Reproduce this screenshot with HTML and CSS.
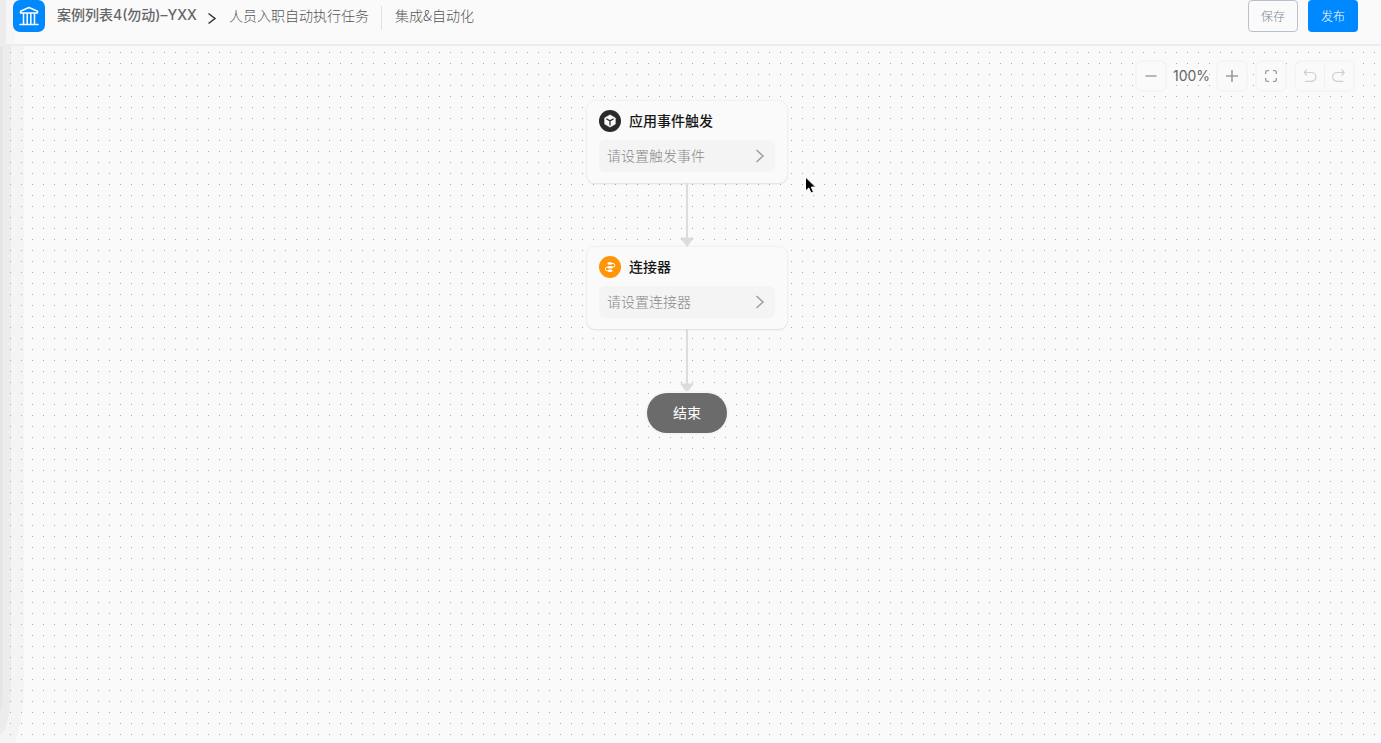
FILE: index.html
```
<!DOCTYPE html>
<html lang="zh-CN">
<head>
<meta charset="utf-8">
<title>集成&amp;自动化</title>
<link rel="stylesheet" href="styles.css">
</head>
<body>
<header class="topbar">
  <a class="logo" href="#" aria-label="首页">
    <svg width="32" height="32" viewBox="0 0 32 32" fill="none" stroke="#fff" stroke-width="1.5" stroke-linecap="round" stroke-linejoin="round"><path d="M7.500 13v-1.800L16 7.500l8.500 3.700V13zM10.500 13v11M14.200 13v11M17.800 13v11M21.500 13v11M7 24.500h18"/></svg>
  </a>
  <nav class="crumbs">
    <a class="crumb crumb-app" href="#">案例列表4(勿动)–YXX</a>
    <svg class="crumb-arrow" width="10" height="14" viewBox="0 0 10 14" fill="none" stroke="#2b3640" stroke-width="1.500"><path d="M1.500 2.500 8 7.500l-6.500 5"/></svg>
    <span class="crumb">人员入职自动执行任务</span>
    <span class="divider"></span>
    <span class="crumb">集成&amp;自动化</span>
  </nav>
  <div class="actions">
    <button class="btn btn-plain" type="button">保存</button>
    <button class="btn btn-primary" type="button">发布</button>
  </div>
</header>
<main class="canvas">
  <div class="edge edge-outer"></div>
  <div class="edge edge-middle"></div>
  <div class="edge edge-inner"></div>
  <div class="dots"></div>
  <div class="tools">
    <button class="tool" type="button" aria-label="缩小"><svg width="16" height="16" viewBox="0 0 16 16" fill="none" stroke="#adb1b6" stroke-width="1.800"><path d="M2.500 8h11"/></svg></button>
    <span class="zoom">100%</span>
    <button class="tool" type="button" aria-label="放大"><svg width="16" height="16" viewBox="0 0 16 16" fill="none" stroke="#9a9ea3" stroke-width="1.600"><path d="M2 8h12M8 2v12"/></svg></button>
    <button class="tool tool-fit" type="button" aria-label="适应画布"><svg width="16" height="16" viewBox="0 0 16 16" fill="none" stroke="#969a9f" stroke-width="1.300" stroke-linecap="round"><path d="M2.700 5.500V4q0-1.300 1.300-1.300h1.500M10.500 2.700H12q1.300 0 1.300 1.300v1.500M13.300 10.500V12q0 1.300-1.300 1.300h-1.500M5.500 13.300H4q-1.300 0-1.300-1.300v-1.500"/></svg></button>
    <div class="history">
      <button class="tool" type="button" aria-label="撤销"><svg width="16" height="16" viewBox="0 0 16 16" fill="none" stroke="#cfd0d2" stroke-width="1.200" stroke-linecap="round" stroke-linejoin="round"><path d="M4.500 2 2.300 4.500 4.500 7M2.300 4.500h7.200a4.400 4.400 0 0 1 0 8.800h-6"/></svg></button>
      <button class="tool" type="button" aria-label="重做"><svg width="16" height="16" viewBox="0 0 16 16" fill="none" stroke="#cfd0d2" stroke-width="1.200" stroke-linecap="round" stroke-linejoin="round"><path d="M11 2l2.200 2.500L11 7M13.200 4.500H6a4.400 4.400 0 0 0 0 8.800h6"/></svg></button>
    </div>
  </div>
  <div class="flow">
    <section class="card">
      <h2 class="card-title">
        <svg width="22" height="22" viewBox="0 0 22 22"><circle cx="11" cy="11" r="11" fill="#2b2b2b"/><path d="M11 4.900 16.300 7.900v6.200L11 17.100l-5.300-3V7.900z" fill="#fff" stroke="#fff" stroke-width=".6" stroke-linejoin="round"/><path d="m7.800 9 3.200 1.900L14.200 9M11 10.900v4" fill="none" stroke="#2b2b2b" stroke-width="1.300" stroke-linecap="round"/></svg>
        <span class="card-name">应用事件触发</span>
      </h2>
      <button class="setting" type="button"><span class="setting-text">请设置触发事件</span>
        <svg width="10" height="14" viewBox="0 0 10 14" fill="none" stroke="#999" stroke-width="1.400"><path d="m1.500 1 6.500 6-6.500 6"/></svg>
      </button>
    </section>
    <svg class="link" width="14" height="64" viewBox="0 0 14 64" fill="#dcdcdc"><path d="M6 0h2v54.500h6L7 64l-7-9.500h6z"/></svg>
    <section class="card">
      <h2 class="card-title">
        <svg width="22" height="22" viewBox="0 0 22 22"><circle cx="11" cy="11" r="11" fill="#ff9507"/><g fill="none" stroke="#fff" stroke-width="1" stroke-linecap="round"><path d="M11 7.500h3a1.800 1.800 0 0 1 0 3.700H8.200a1.800 1.800 0 0 0 0 3.600H11"/></g><g fill="#fff"><rect x="8.500" y="6.200" width="4.500" height="2.600" rx="1.300"/><rect x="8.700" y="9.900" width="4.600" height="2.500" rx="1.200"/><rect x="9" y="13.500" width="4.500" height="2.600" rx="1.300"/></g></svg>
        <span class="card-name">连接器</span>
      </h2>
      <button class="setting" type="button"><span class="setting-text">请设置连接器</span>
        <svg width="10" height="14" viewBox="0 0 10 14" fill="none" stroke="#999" stroke-width="1.400"><path d="m1.500 1 6.500 6-6.500 6"/></svg>
      </button>
    </section>
    <svg class="link" width="14" height="64" viewBox="0 0 14 64" fill="#dcdcdc"><path d="M6 0h2v54.500h6L7 64l-7-9.500h6z"/></svg>
    <div class="end">结束</div>
  </div>
  <svg class="pointer" width="14" height="20" viewBox="0 0 14 20"><path d="M1.500 1v14l3.300-3 2.200 5 2.500-1-2.200-4.900h4.400z" fill="#000" stroke="#fff" stroke-width="1" stroke-linejoin="round"/></svg>
</main>
</body>
</html>
```
FILE: styles.css
```
* {
  box-sizing: border-box;
}

body {
  display: flex;
  flex-direction: column;
  min-height: 100vh;
  margin: 0;
  background: #fafafa;
  color: #666;
  font: 300 14px/20px "Noto Sans CJK SC", sans-serif;
}

button {
  padding: 0;
  border: 0;
  font: inherit;
}

svg {
  display: block;
  flex: none;
}

.topbar {
  display: flex;
  align-items: flex-start;
  height: 46px;
  padding: 0 23px 0 13px;
  border-bottom: 2px solid #ebebf2;
  background: linear-gradient(90deg, #ececec 6px, #f6f6f6 6px, #f6f6f6 15px, #fafafa 15px);
}

.logo {
  border-radius: 7px;
  background: #0089ff;
}

.crumbs {
  display: flex;
  flex: 1;
  align-items: center;
  height: 30px;
  padding-left: 12px;
}

.crumb {
  color: #555;
  text-decoration: none;
  white-space: nowrap;
}

.crumb-app {
  color: #666;
  font-family: Inter, "Noto Sans CJK SC", sans-serif;
  font-weight: 500;
}

.crumb-arrow {
  margin: 5px 12px 0 10px;
}

.divider {
  width: 1px;
  height: 24px;
  margin: 6px 13px 0 12px;
  background: #e2e2e4;
}

.actions {
  display: flex;
  gap: 10px;
}

.btn {
  width: 50px;
  height: 32px;
  border-radius: 4px;
  font-size: 12px;
}

.btn-plain {
  border: 1px solid #b8c2cf;
  background: #fafafa;
  color: #7c8a9c;
}

.btn-primary {
  background: #0089ff;
  color: #fff;
}

.canvas {
  position: relative;
  flex: 1;
  overflow: hidden;
  background: #fafafb;
}

.edge {
  position: absolute;
  left: 0;
  top: 0;
}

.edge-outer {
  width: 24px;
  bottom: -14px;
  border-bottom-right-radius: 24px 70px;
  background: #f4f4f4;
}

.edge-middle {
  width: 11px;
  bottom: 9px;
  border-bottom-right-radius: 11px 50px;
  background: #ececec;
}

.edge-inner {
  width: 3px;
  bottom: 32px;
  border-bottom-right-radius: 3px 30px;
  background: #e5e5e5;
}

.dots {
  position: absolute;
  inset: 6px 0 0 10px;
  background: conic-gradient(from 270deg at 1px 1px, #a9a9b8 90deg, transparent 0) 0 0 / 11px 11px;
}

.tools {
  position: absolute;
  top: 16px;
  right: 28px;
  display: flex;
  align-items: center;
}

.tool {
  display: flex;
  align-items: center;
  justify-content: center;
  width: 28px;
  height: 28px;
  border-radius: 5px;
  background: #fafafa;
  box-shadow: 0 0 0 2px #f5f5f6;
}

.zoom {
  width: 53px;
  font-family: Inter, "Noto Sans CJK SC", sans-serif;
  font-weight: 400;
  text-align: center;
}

.tool-fit {
  margin: 0 11px;
}

.history {
  display: flex;
  gap: 1px;
  border-radius: 5px;
  box-shadow: 0 0 0 2px #f5f5f6;
}

.history .tool {
  box-shadow: none;
}

.history .tool + .tool {
  box-shadow: -1px 0 0 #f0f0f1;
}

.flow {
  position: relative;
  display: flex;
  flex-direction: column;
  align-items: center;
  padding: 55px 7px 24px 0;
}

.card {
  width: 200px;
  padding: 9px 12px 11px;
  border-radius: 8px;
  background: #fafafa;
  box-shadow: 0 0 3px rgba(0, 0, 0, 0.08), 0 1px 2px rgba(0, 0, 0, 0.08);
}

.card-title {
  display: flex;
  gap: 8px;
  align-items: center;
  margin: 0 0 8px;
  color: #171717;
  font-size: 14px;
  font-weight: 500;
  line-height: 20px;
}

.card-name,
.setting-text {
  padding-bottom: 2px;
}

.setting {
  display: flex;
  align-items: center;
  justify-content: space-between;
  width: 100%;
  height: 32px;
  padding: 0 10px 0 8px;
  border-radius: 6px;
  background: #f4f4f4;
  color: #888;
}

.end {
  width: 80px;
  height: 40px;
  border-radius: 20px;
  background: #6b6b6b;
  box-shadow: 0 0 0 2px #f5f5f5;
  color: #fff;
  font-weight: 400;
  line-height: 38px;
  text-align: center;
}

.pointer {
  position: absolute;
  top: 130px;
  left: 804px;
}
```
